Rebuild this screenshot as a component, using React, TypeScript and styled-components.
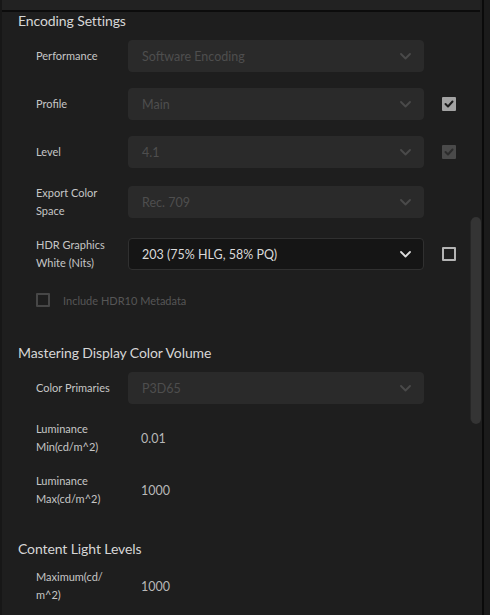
import React from "react";
import styled, { createGlobalStyle } from "styled-components";

const GlobalStyle = createGlobalStyle`
  html, body {
    margin: 0;
    padding: 0;
    background: #1e1e1e;
  }
  body {
    font-family: Lato, "Open Sans", sans-serif;
    -webkit-font-smoothing: antialiased;
  }
`;

const Page = styled.div`
  display: flex;
  width: 490px;
  height: 615px;
  overflow: hidden;
  background: #1e1e1e;
`;

const Panel = styled.div`
  flex: 1;
  display: flex;
  flex-direction: column;
  border-left: 2px solid #171717;
  min-width: 0;
`;

const TopStrip = styled.div`
  height: 10px;
  flex-shrink: 0;
  background: #222222;
  border-bottom: 2px solid #0c0c0c;
  margin-right: 2px;
`;

const Content = styled.div`
  position: relative;
  flex: 1;
  padding-left: 16px;
  overflow: hidden;
`;

const Divider = styled.div`
  width: 2px;
  background: #0a0a0a;
`;

const Gutter = styled.div`
  width: 6px;
  background: #1b1b1b;
`;

const ScrollThumb = styled.div`
  position: absolute;
  right: 1px;
  top: 205px;
  width: 10px;
  height: 207px;
  border-radius: 5px;
  background: #343434;
  box-shadow: -4px 0 0 -3px #262626;
`;

const Section = styled.section<{ $first?: boolean }>`
  margin-top: ${(p) => (p.$first ? "0" : "32px")};
`;

const SectionTitle = styled.h3`
  margin: 0 0 10px 0;
  height: 18px;
  line-height: 18px;
  font-size: 14px;
  font-weight: 400;
  color: #d6d6d6;
  letter-spacing: -0.1px;
`;

const Rows = styled.div`
  display: flex;
  flex-direction: column;
  gap: 16px;
  padding-left: 18px;
`;

const Row = styled.div<{ $tall?: boolean }>`
  display: flex;
  align-items: center;
  min-height: ${(p) => (p.$tall ? "36px" : "32px")};
`;

const Label = styled.div`
  width: 92px;
  flex-shrink: 0;
  padding-right: 12px;
  box-sizing: border-box;
  font-size: 11px;
  line-height: 18px;
  color: #c6c6c6;
`;

const Select = styled.div<{ $disabled?: boolean }>`
  width: 296px;
  height: 32px;
  box-sizing: border-box;
  display: flex;
  align-items: center;
  justify-content: space-between;
  padding: 0 12px 0 13px;
  border-radius: 4px;
  font-size: 12.5px;
  background: ${(p) => (p.$disabled ? "#2a2a2a" : "#151515")};
  border: 1px solid ${(p) => (p.$disabled ? "#2a2a2a" : "#303030")};
  color: ${(p) => (p.$disabled ? "#4e4e4e" : "#dadada")};
`;

const Value = styled.div`
  padding-left: 13px;
  font-size: 12.5px;
  color: #b8b8b8;
`;

const CheckBox = styled.span<{ $checked?: boolean; $disabled?: boolean }>`
  width: 14px;
  height: 14px;
  box-sizing: border-box;
  flex-shrink: 0;
  border-radius: 1px;
  display: inline-flex;
  align-items: center;
  justify-content: center;
  background: ${(p) =>
    p.$checked ? (p.$disabled ? "#4a4a4a" : "#a3a3a3") : "transparent"};
  border: 2px solid
    ${(p) =>
      p.$checked
        ? "transparent"
        : p.$disabled
        ? "#474747"
        : "#b4b4b4"};
`;

const RowCheck = styled.div`
  margin-left: 18px;
  display: flex;
  align-items: center;
`;

const InlineCheckRow = styled.label`
  display: flex;
  align-items: center;
  gap: 13px;
  height: 24px;
  font-size: 11px;
  color: #565656;
`;

const Chevron = ({ color }: { color: string }) => (
  <svg width="11" height="7" viewBox="0 0 11 7">
    <polyline
      points="1,1 5.5,5.5 10,1"
      fill="none"
      stroke={color}
      strokeWidth="1.8"
      strokeLinecap="round"
      strokeLinejoin="round"
    />
  </svg>
);

const Check = ({ color }: { color: string }) => (
  <svg width="10" height="10" viewBox="0 0 10 10">
    <polyline
      points="1.5,5 4,7.5 8.5,2.5"
      fill="none"
      stroke={color}
      strokeWidth="2"
      strokeLinecap="round"
      strokeLinejoin="round"
    />
  </svg>
);

interface SelectRowProps {
  label: React.ReactNode;
  value: string;
  disabled?: boolean;
  tall?: boolean;
  check?: "on" | "on-disabled" | "off";
}

const SelectRow = ({ label, value, disabled, tall, check }: SelectRowProps) => (
  <Row $tall={tall}>
    <Label>{label}</Label>
    <Select $disabled={disabled}>
      <span>{value}</span>
      <Chevron color={disabled ? "#4a4a4a" : "#dcdcdc"} />
    </Select>
    {check && (
      <RowCheck>
        {check === "off" ? (
          <CheckBox />
        ) : (
          <CheckBox $checked $disabled={check === "on-disabled"}>
            <Check color={check === "on" ? "#1b1b1b" : "#2c2c2c"} />
          </CheckBox>
        )}
      </RowCheck>
    )}
  </Row>
);

const ValueRow = ({ label, value }: { label: React.ReactNode; value: string }) => (
  <Row $tall>
    <Label>{label}</Label>
    <Value>{value}</Value>
  </Row>
);

export default function App() {
  return (
    <>
      <GlobalStyle />
      <Page>
        <Panel>
          <TopStrip />
          <Content>
            <Section $first>
              <SectionTitle>Encoding Settings</SectionTitle>
              <Rows>
                <SelectRow label="Performance" value="Software Encoding" disabled />
                <SelectRow label="Profile" value="Main" disabled check="on" />
                <SelectRow label="Level" value="4.1" disabled check="on-disabled" />
                <SelectRow label="Export Color Space" value="Rec. 709" disabled tall />
                <SelectRow
                  label="HDR Graphics White (Nits)"
                  value="203 (75% HLG, 58% PQ)"
                  tall
                  check="off"
                />
                <InlineCheckRow>
                  <CheckBox $disabled />
                  Include HDR10 Metadata
                </InlineCheckRow>
              </Rows>
            </Section>

            <Section>
              <SectionTitle>Mastering Display Color Volume</SectionTitle>
              <Rows>
                <SelectRow label="Color Primaries" value="P3D65" disabled />
                <ValueRow label="Luminance Min(cd/m^2)" value="0.01" />
                <ValueRow label="Luminance Max(cd/m^2)" value="1000" />
              </Rows>
            </Section>

            <Section>
              <SectionTitle>Content Light Levels</SectionTitle>
              <Rows>
                <ValueRow
                  label={
                    <>
                      Maximum(cd/
                      <wbr />
                      m^2)
                    </>
                  }
                  value="1000"
                />
              </Rows>
            </Section>

            <ScrollThumb />
          </Content>
        </Panel>
        <Divider />
        <Gutter />
      </Page>
    </>
  );
}
